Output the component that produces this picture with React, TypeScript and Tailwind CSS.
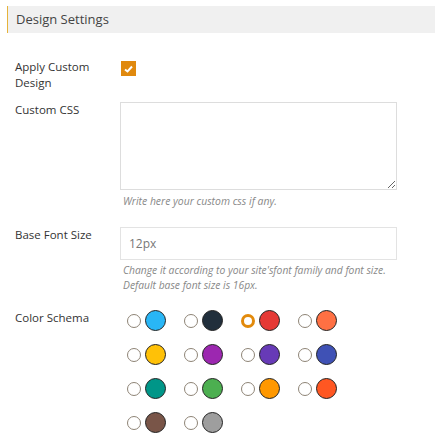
import { useState } from "react";

const colors = [
  "#29b6f6", "#212f3c", "#e53935", "#ff7043",
  "#ffc107", "#9c27b0", "#673ab7", "#3f51b5",
  "#009688", "#4caf50", "#ff9800", "#ff5722",
  "#795548", "#9e9e9e",
];

function Radio({ checked }: { checked: boolean }) {
  return checked ? (
    <span className="block w-[14px] h-[14px] rounded-full border-[3px] border-[#e28a0c] bg-white" />
  ) : (
    <span className="block w-[14px] h-[14px] rounded-full border border-[#8e8476] bg-white" />
  );
}

export default function App() {
  const [selected, setSelected] = useState(2);

  return (
    <div className="w-[441px] h-[447px] bg-white font-['Open_Sans',sans-serif] text-[#333]">
      <div className="mt-[6px] ml-[7px] w-[428px] h-[27px] bg-[#f0f0f0] border-l border-[#e6b33a] flex items-center pl-[8px] text-[13px] text-[#444]">
        Design Settings
      </div>

      <div className="flex mt-[26px]">
        <div className="w-[105px] ml-[15px] text-[11.5px] leading-[16px]">
          Apply Custom
          <br />
          Design
        </div>
        <div className="ml-[1px] mt-[2px] w-[15px] h-[15px] bg-[#e0890e] flex items-center justify-center">
          <svg width="9" height="8" viewBox="0 0 9 8">
            <path d="M1 4.5 L3.5 6.5 L8 1.5" stroke="white" strokeWidth="2" fill="none" />
          </svg>
        </div>
      </div>

      <div className="flex mt-[11px]">
        <div className="w-[105px] ml-[15px] text-[11.5px] leading-[16px]">Custom CSS</div>
        <div>
          <textarea className="block w-[277px] h-[88px] border border-[#dddddd] outline-none resize-y" />
          <p className="mt-[4px] ml-[3px] text-[10.4px] leading-[14px] italic text-[#888]">
            Write here your custom css if any.
          </p>
        </div>
      </div>

      <div className="flex mt-[19px]">
        <div className="w-[105px] ml-[15px] text-[11.5px] leading-[16px]">Base Font Size</div>
        <div>
          <div className="w-[277px] h-[33px] border border-[#e3e3e3] flex items-center pl-[8px] text-[12px] text-[#777]">
            12px
          </div>
          <p className="mt-[3px] ml-[3px] text-[10.3px] leading-[15px] italic text-[#888]">
            Change it according to your site'sfont family and font size.
            <br />
            Default base font size is 16px.
          </p>
        </div>
      </div>

      <div className="flex mt-[17px]">
        <div className="w-[105px] ml-[15px] text-[11.5px] leading-[16px]">Color Schema</div>
        <div className="ml-[7px] grid grid-cols-[57px_57px_57px_57px] gap-y-[13px]">
          {colors.map((c, i) => (
            <button
              key={c}
              onClick={() => setSelected(i)}
              className="flex items-center gap-[4px] h-[21px]"
            >
              <Radio checked={selected === i} />
              <span
                className="block w-[21px] h-[21px] rounded-full border border-[#222]"
                style={{ backgroundColor: c }}
              />
            </button>
          ))}
        </div>
      </div>
    </div>
  );
}
